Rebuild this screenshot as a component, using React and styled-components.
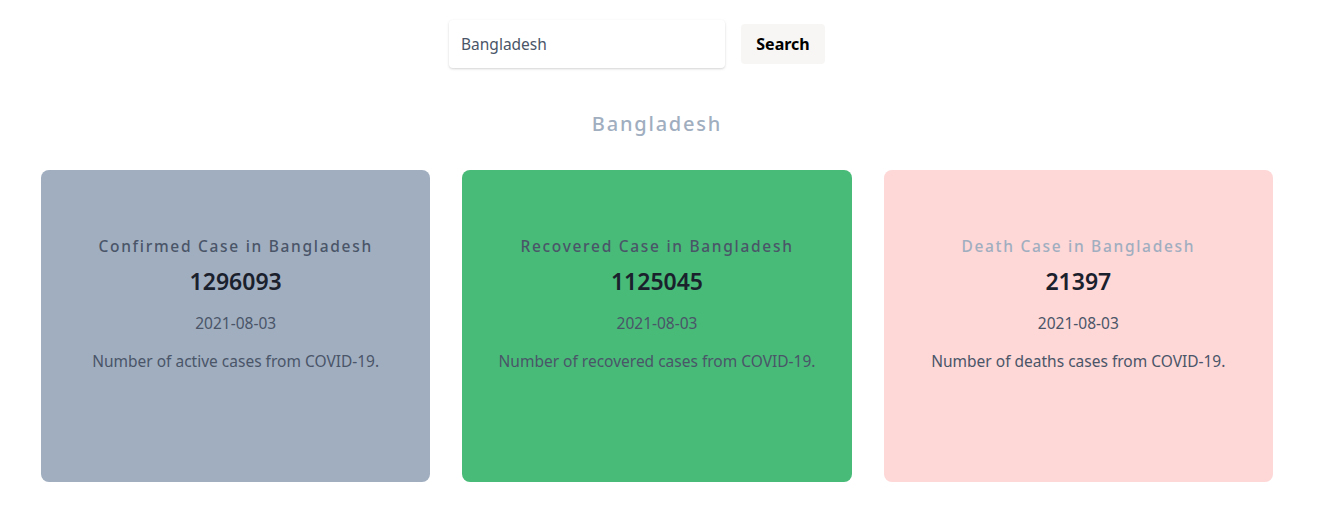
import React from 'react';
import styled, { createGlobalStyle } from 'styled-components';

const GlobalStyle = createGlobalStyle`
    body {
        margin: 0;
        background: #ffffff;
        font-family: "Noto Sans", "Open Sans", sans-serif;
    }
`;

const Page = styled.div`
    padding: 20px 49px 40px 41px;
`;

const SearchRow = styled.form`
    display: flex;
    justify-content: center;
    align-items: center;
    gap: 16px;
    padding-right: 40px;
`;

const SearchInput = styled.input`
    width: 276px;
    height: 48px;
    box-sizing: border-box;
    padding: 0 12px;
    border: none;
    border-radius: 4px;
    box-shadow: 0 1px 3px rgba(0, 0, 0, 0.12), 0 1px 2px rgba(0, 0, 0, 0.06);
    font-family: inherit;
    font-size: 15.5px;
    color: #4a5568;
    outline: none;
`;

const SearchButton = styled.button`
    width: 84px;
    height: 40px;
    border: none;
    border-radius: 4px;
    background: #f7f6f4;
    font-family: inherit;
    font-size: 16px;
    font-weight: 700;
    color: #000;
    cursor: pointer;
`;

const Country = styled.h2`
    margin: 44px 0 0;
    text-align: center;
    font-size: 20px;
    font-weight: 500;
    letter-spacing: 1.8px;
    color: #a0aec0;
    line-height: 24px;
`;

const Cards = styled.div`
    display: grid;
    grid-template-columns: repeat(3, 1fr);
    gap: 32px;
    margin-top: 34px;
`;

const Card = styled.div`
    height: 312px;
    box-sizing: border-box;
    border-radius: 8px;
    background: ${p => p.bg};
    padding-top: 66px;
    display: flex;
    flex-direction: column;
    align-items: center;
    text-align: center;
`;

const CardTitle = styled.h3`
    margin: 0;
    font-size: 15.5px;
    font-weight: 500;
    letter-spacing: 1.7px;
    line-height: 20px;
    color: ${p => p.color};
`;

const Count = styled.div`
    margin-top: 10px;
    font-size: 23px;
    font-weight: 600;
    line-height: 30px;
    color: #1a202c;
`;

const Info = styled.p`
    margin: 15px 0 0;
    font-size: 15.5px;
    line-height: 24px;
    color: #4a5568;
`;

const Description = styled(Info)`
    margin-top: 14px;
`;

const stats = [
    { kind: 'Confirmed', value: 1296093, bg: '#a0aec0', titleColor: '#4a5568', text: 'Number of active cases from COVID-19.' },
    { kind: 'Recovered', value: 1125045, bg: '#48bb78', titleColor: '#4a5568', text: 'Number of recovered cases from COVID-19.' },
    { kind: 'Death', value: 21397, bg: '#fed7d7', titleColor: '#a0aec0', text: 'Number of deaths cases from COVID-19.' },
];

export default function App() {
    const country = 'Bangladesh';

    return (
        <Page>
            <GlobalStyle />
            <SearchRow onSubmit={e => e.preventDefault()}>
                <SearchInput defaultValue={country} />
                <SearchButton type="submit">Search</SearchButton>
            </SearchRow>

            <Country>{country}</Country>

            <Cards>
                {stats.map(s => (
                    <Card key={s.kind} bg={s.bg}>
                        <CardTitle color={s.titleColor}>{s.kind} Case in {country}</CardTitle>
                        <Count>{s.value}</Count>
                        <Info>2021-08-03</Info>
                        <Description>{s.text}</Description>
                    </Card>
                ))}
            </Cards>
        </Page>
    );
}
